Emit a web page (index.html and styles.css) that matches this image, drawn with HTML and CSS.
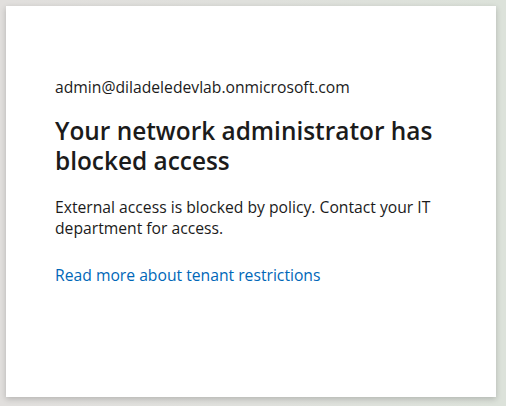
FILE: index.html
```html
<!DOCTYPE html>
<html lang="en">
<head>
<meta charset="utf-8">
<title>Blocked access</title>
<link rel="stylesheet" href="styles.css">
</head>
<body>
<main class="card">
  <div class="identity">admin@diladeledevlab.onmicrosoft.com</div>
  <h1 class="title">Your network administrator has blocked access</h1>
  <p class="message">External access is blocked by policy. Contact your IT department for access.</p>
  <a class="link" href="#">Read more about tenant restrictions</a>
</main>
</body>
</html>
```
FILE: styles.css
```css
html, body {
  margin: 0;
  height: 100%;
}
body {
  background: linear-gradient(90deg, #e1dfdd 0%, #dfe0dc 50%, #dce2da 100%);
  padding: 6px 10px 9px 6px;
  box-sizing: border-box;
  font-family: "Open Sans", "Noto Sans", sans-serif;
  color: #1b1b1b;
}
.card {
  background: #fff;
  height: 100%;
  box-sizing: border-box;
  padding: 71px 30px 0 49px;
  box-shadow: 0 2px 6px rgba(0,0,0,0.2);
}
.identity {
  font-size: 15.7px;
  line-height: 20px;
}
.title {
  font-size: 24.4px;
  font-weight: 600;
  line-height: 30px;
  margin: 19px 0 0;
}
.message {
  font-size: 15.7px;
  line-height: 21px;
  margin: 21px 0 0;
}
.link {
  display: block;
  margin-top: 26px;
  font-size: 15.7px;
  line-height: 21px;
  color: #0067b8;
  text-decoration: none;
}
```
